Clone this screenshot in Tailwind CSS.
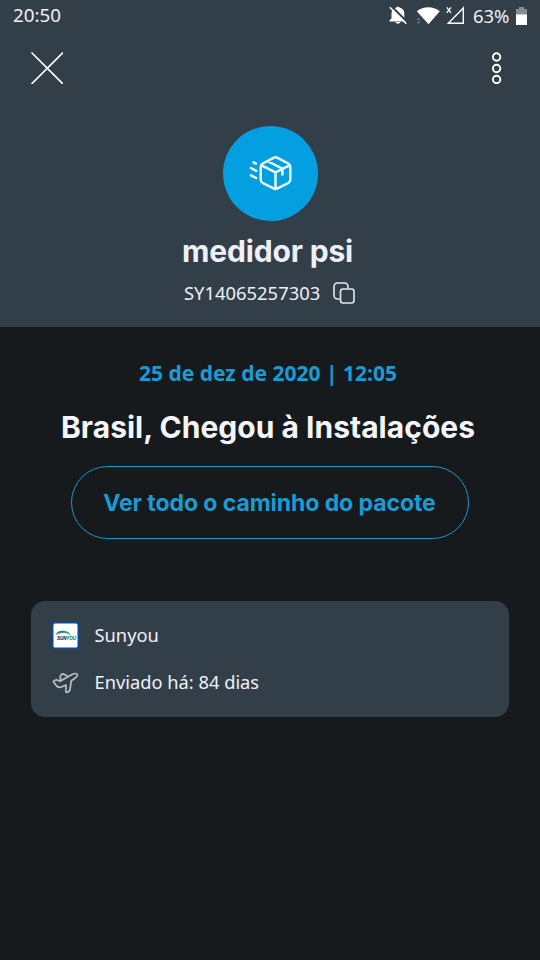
<!DOCTYPE html>
<html lang="pt-BR">
<head>
<meta charset="utf-8">
<title>medidor psi</title>
<script src="https://cdn.jsdelivr.net/npm/@tailwindcss/browser@4"></script>
</head>
<body class="w-[540px] h-[960px] overflow-hidden bg-[#161a1d] text-[#eef1fa] font-['Noto_Sans',sans-serif]">
<header class="h-[327px] bg-[#333f48] flex flex-col">
  <div class="h-8 flex items-center justify-between pl-[13px] pr-[13px]">
    <span class="text-[18.800px] leading-[31px] h-8 whitespace-nowrap">20:50</span>
    <div class="flex items-center">
      <svg class="w-[90px] h-8" viewBox="380 0 90 32" fill="none">
        <path d="M389.500 21.500v-1l2-2V13.500c0-3 1.500-5 4.500-5.700a2 1.500 0 0 1 3.800 0c3 .7 4.500 2.700 4.500 5.700v5l2 2v1zM395.500 22h4.800c-.4 2.300-4.400 2.300-4.800 0z" fill="#fff"/>
        <path d="M391.500 6.200 407.500 22.200" stroke="#333f48" stroke-width="2"/>
        <path d="M389.800 7.300 406.300 23.700" stroke="#fff" stroke-width="1.400"/>
        <path d="M416.800 11.200C423.500 6 433 6 439.800 11.200L428.500 24.300z" fill="#fff"/>
        <path d="M416.500 20l2-2.500 2 2.500zM416.500 21.500l2 2.500 2-2.500z" fill="#6d7880"/>
        <path d="M448.300 23.300H463.300V8z" stroke="#fff" stroke-width="1.400"/>
        <path d="M446.800 7.300l4.200 5.600M451 7.300l-4.200 5.600" stroke="#fff" stroke-width="1.300"/>
      </svg>
      <span class="ml-[3px] w-[37px] text-[18.500px] tracking-[-0.100px] leading-[31px] h-8 whitespace-nowrap">63%</span>
      <svg class="ml-[6px] w-[11px] h-8" viewBox="0 0 11 32"><path d="M3 7h5v2h3v6H0V9h3z" fill="#858d93"/><path d="M0 14.500h11V25H0z" fill="#fff"/></svg>
    </div>
  </div>
  <div class="h-[94px] flex justify-between items-start pt-[20px] pl-[31px] pr-[38px]">
    <svg class="w-8 h-8" viewBox="0 0 32 32" stroke="#fff" stroke-width="1.700" stroke-linecap="round"><path d="M1 1l30.500 30.500M31.500 1L1 31.500"/></svg>
    <svg class="w-[11px] h-8" viewBox="0 0 11 32" fill="none" stroke="#fff" stroke-width="1.900"><circle cx="5.600" cy="5" r="3.700"/><circle cx="5.600" cy="16.500" r="3.700"/><circle cx="5.600" cy="27.500" r="3.700"/></svg>
  </div>
  <div class="ml-[222.500px] w-[95px] h-[95px] rounded-full bg-[#049fe0]">
    <svg class="w-[95px] h-[95px]" viewBox="223 126 95 95" fill="none" stroke="#e9fbff" stroke-width="2.500" stroke-linecap="round" stroke-linejoin="round">
      <path d="M273.500 157.800Q275.500 156.800 277.500 157.800L288.300 163.500Q290.300 164.600 290.300 167V179.500Q290.300 182 288.300 183L277.500 188.400Q275.500 189.400 273.500 188.400L262.700 183Q260.700 182 260.700 179.500V167Q260.700 164.600 262.700 163.500zM261.500 165.300L275.500 172.300L289.500 165.300M275.500 172.300V188.500M268.300 161.500L282.400 168.600V174.500"/>
      <path d="M253.500 162.300l2.500 1.400M251 168l5.200 2.800M251 175.300l5.200 2.700"/>
    </svg>
  </div>
  <h1 class="mt-[8px] h-11 leading-[44px] text-center pr-[5px] text-[30px] tracking-[-0.150px] font-bold font-['Inter',sans-serif]">medidor psi</h1>
  <div class="h-[39px] flex items-center pl-[184px]">
    <span class="w-[136px] text-[18.400px] whitespace-nowrap">SY14065257303</span>
    <svg class="ml-[13px] w-[22px] h-[22px]" viewBox="0 0 22 22" fill="none" stroke="#e3e9f0" stroke-width="1.600" stroke-linecap="round"><path d="M6 17H4.500A3.500 3.500 0 0 1 1 13.500V4.500A3.500 3.500 0 0 1 4.500 1H11.500A3.500 3.500 0 0 1 15 4.500V6"/><rect x="7.500" y="7" width="13.500" height="14" rx="2.500"/></svg>
  </div>
</header>
<main class="flex flex-col">
  <p class="mt-[30px] h-8 leading-8 pl-[139px] text-[21px] font-bold text-[#1a9bd4] whitespace-nowrap">25 de dez de 2020 | 12:05</p>
  <h2 class="mt-[16px] h-11 leading-[44px] pl-[61px] text-[30px] tracking-[0.020px] font-bold whitespace-nowrap text-[#f4f5f8] font-['Inter',sans-serif]">Brasil, Chegou à Instalações</h2>
  <button class="mt-[17px] ml-[71px] w-[398px] h-[73px] pt-px pr-px rounded-full border-[1.500px] border-[#1c96d0] text-[#1a9bd4] text-[23px] tracking-[-0.070px] font-bold whitespace-nowrap font-['Inter',sans-serif]">Ver todo o caminho do pacote</button>
  <section class="mt-[62px] mx-[31px] h-[116px] rounded-[14px] bg-[#333f48] pl-[21px] pt-[11px] text-[18.300px]">
    <div class="h-[47px] flex items-center gap-[15.500px]">
      <svg class="w-[27px] h-[27px]" viewBox="0 0 27 27"><rect width="27" height="27" rx="2" fill="#104b93"/><rect x="1.500" y="1.500" width="24" height="24" rx="1.500" fill="#fff"/><path d="M3 14C7 8 17 6.500 19 14C15 9.500 9 10 3 14z" fill="#25a05a"/><path d="M2.800 12.500C6 9 10 8.500 13 9C9 9.500 6 10.500 2.800 12.500z" fill="#174991"/><text x="5" y="18" font-family="Liberation Sans, sans-serif" font-size="5.200" font-weight="bold" font-style="italic" textLength="19" lengthAdjust="spacingAndGlyphs" fill="#163f7d" stroke="#163f7d" stroke-width=".2">SUN<tspan fill="#1c9a56" stroke="#1c9a56">YOU</tspan></text></svg>
      <span class="-mt-px">Sunyou</span>
    </div>
    <div class="h-[47px] flex items-center gap-[15.500px]">
      <svg class="w-[27px] h-[27px]" viewBox="0 0 27 27" fill="none" stroke="#b7c0c6" stroke-width="1.700" stroke-linejoin="round" stroke-linecap="round"><path d="M2.300 11.700L4.500 10.700L8 12.300L12.500 9.800L20.500 5.300C23 4 25.300 4.300 25.500 6C25.500 7.500 24 8.500 22.500 9.500L19.300 11.700L18 20.500C17.700 22 16.500 23 14.800 23.300C14 23.300 13.700 22.500 13.800 21.500L14 16L9.500 18C7 18.700 5.500 18.300 4.300 16.500L1.600 13C1.200 12.400 1.600 11.900 2.300 11.700M8.500 11L8.300 7.500C8.300 6.300 10 4.700 11.500 5L16 7.500"/></svg>
      <span class="-mt-px">Enviado há: 84 dias</span>
    </div>
  </section>
</main>
</body>
</html>
